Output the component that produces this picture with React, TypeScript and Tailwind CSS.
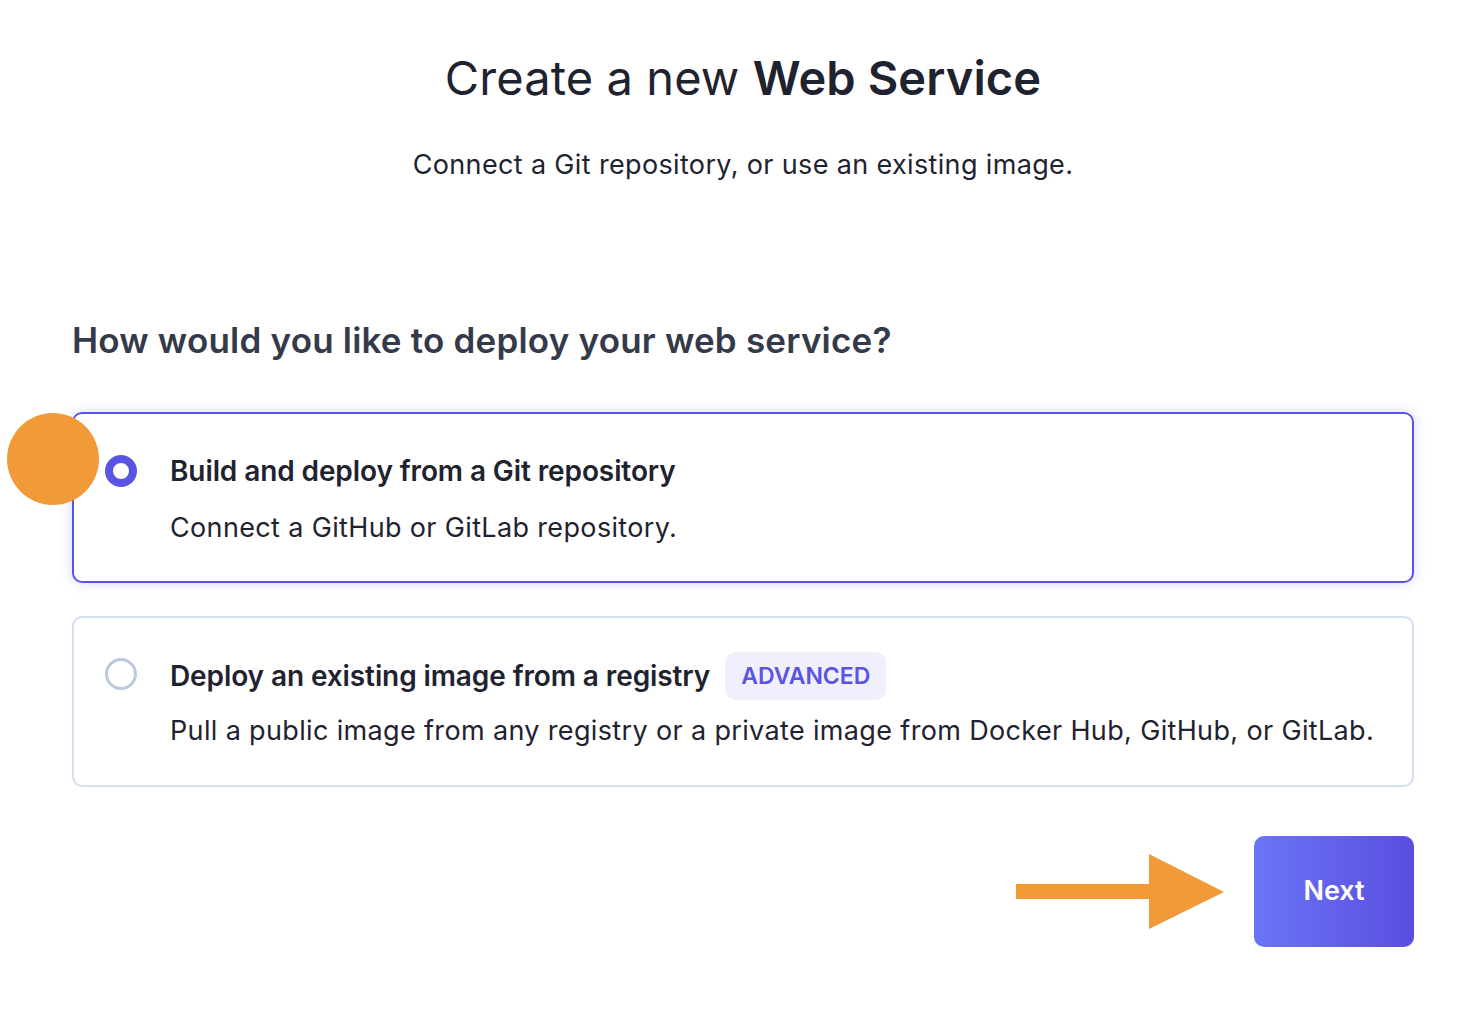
import React from 'react';

function Radio({ checked }: { checked: boolean }) {
  return checked ? (
    <span className="block w-[32px] h-[32px] rounded-full border-[8px] border-[#5a54e3] bg-white shrink-0" />
  ) : (
    <span className="block w-[32px] h-[32px] rounded-full border-[3px] border-[#bcc7e2] bg-white shrink-0" />
  );
}

export default function App() {
  return (
    <main className="relative w-full min-h-screen bg-white text-[#1f2330]" style={{ fontFamily: 'Inter, "Noto Sans", sans-serif' }}>
      <div className="pl-[72px] pr-[60px] pt-[49px] pb-[80px]">
        <header className="flex flex-col items-center">
          <h1 className="text-[47px] leading-[58px] font-normal tracking-[0.1px] text-[#1f2330]">
            Create a new <span className="font-semibold">Web Service</span>
          </h1>
          <p className="mt-[42px] text-[27px] leading-[32px] tracking-[0.35px] text-[#1f2330]">Connect a Git repository, or use an existing image.</p>
        </header>

        <h2 className="mt-[137px] text-[35px] leading-[44px] font-semibold tracking-[0.2px] text-[#353a4a]">
          How would you like to deploy your web service?
        </h2>

        <div className="mt-[50px] flex flex-col gap-[33px]">
          <div className="h-[171px] rounded-[10px] border-2 border-[#5a54e3] shadow-[0_0_12px_rgba(90,84,227,0.25)] flex items-start gap-[33px] px-[31px] pt-[41px]">
            <Radio checked />
            <div className="flex flex-col">
              <span className="text-[28px] leading-[34px] font-semibold tracking-[-0.1px] -mt-[1px]">Build and deploy from a Git repository</span>
              <span className="mt-[24px] text-[27px] leading-[32px] tracking-[0.35px]">Connect a GitHub or GitLab repository.</span>
            </div>
          </div>

          <div className="h-[171px] rounded-[10px] border-2 border-[#d5ddee] flex items-start gap-[33px] px-[31px] pt-[40px]">
            <Radio checked={false} />
            <div className="flex flex-col">
              <div className="flex items-center gap-[15px] -mt-[6px]">
                <span className="text-[28px] leading-[34px] font-semibold tracking-[-0.1px]">Deploy an existing image from a registry</span>
                <span className="h-[48px] px-[16px] rounded-[10px] bg-[#f0f0fc] text-[#5a54e3] text-[23px] font-semibold flex items-center">ADVANCED</span>
              </div>
              <span className="mt-[15px] text-[27px] leading-[32px] tracking-[0.35px]">Pull a public image from any registry or a private image from Docker Hub, GitHub, or GitLab.</span>
            </div>
          </div>
        </div>

        <div className="mt-[49px] flex justify-end items-center gap-[30px]">
          <svg width="208" height="76" viewBox="0 0 208 76" className="block">
            <rect x="0" y="30" width="136" height="15" fill="#f09a38" />
            <polygon points="133,0 208,38 133,75" fill="#f09a38" />
          </svg>
          <button
            type="button"
            className="w-[160px] h-[111px] rounded-[10px] bg-gradient-to-r from-[#6b74f6] to-[#5a4de0] text-white text-[27px] font-semibold"
          >
            Next
          </button>
        </div>
      </div>

      <span className="absolute left-[7px] top-[413px] w-[92px] h-[92px] rounded-full bg-[#f09a38]" />
    </main>
  );
}
